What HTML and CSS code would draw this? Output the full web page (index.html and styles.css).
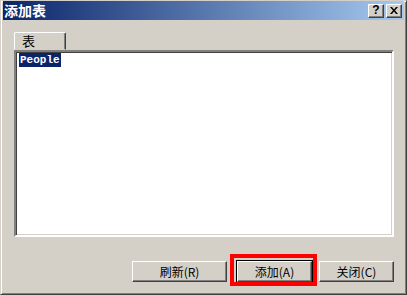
FILE: index.html
```html
<!DOCTYPE html>
<html lang="zh">
<head>
  <meta charset="UTF-8">
  <title>添加表</title>
  <link rel="stylesheet" href="styles.css">
</head>
<body>
  <div class="window">
    <div class="titlebar">
      <span class="title">添加表</span>
      <div class="caption-buttons">
        <span class="cap-btn">?</span>
        <span class="cap-btn close">
          <svg width="8" height="7" viewBox="0 0 8 7">
            <path d="M0 0h2l2 2.5L6 0h2L5 3.5 8 7H6L4 4.5 2 7H0l3-3.5z" fill="#000"/>
          </svg>
        </span>
      </div>
    </div>

    <div class="content">
      <div class="tabs">
        <div class="tab">表</div>
      </div>
      <div class="list">
        <div class="item selected">People</div>
      </div>
      <div class="buttons">
        <button class="btn wide">刷新(R)</button>
        <div class="marked">
          <button class="btn default">添加(A)</button>
        </div>
        <button class="btn">关闭(C)</button>
      </div>
    </div>
  </div>
</body>
</html>
```

FILE: styles.css
```css
body {
  margin: 0;
  font-family: "Noto Sans CJK SC", "DejaVu Sans", sans-serif;
  font-size: 12px;
  background: #d4d0c8;
}

.window {
  width: 407px;
  height: 295px;
  box-sizing: border-box;
  background: #d4d0c8;
  border: 1px solid;
  border-color: #d4d0c8 #404040 #404040 #d4d0c8;
  box-shadow: inset 1px 1px #fff, inset -1px -1px #808080;
  padding: 0 2px 2px 2px;
  display: flex;
  flex-direction: column;
}

.titlebar {
  height: 19px;
  background: linear-gradient(to right, #0a246a, #a6caf0);
  display: flex;
  align-items: center;
  justify-content: space-between;
  padding: 0 2px 0 1px;
}

.title {
  color: #fff;
  font-weight: bold;
  font-size: 14px;
  line-height: 19px;
}

.caption-buttons {
  display: flex;
  gap: 2px;
}

.cap-btn {
  width: 16px;
  height: 14px;
  box-sizing: border-box;
  background: #d4d0c8;
  border: 1px solid;
  border-color: #fff #404040 #404040 #fff;
  box-shadow: inset -1px -1px #808080;
  display: flex;
  align-items: center;
  justify-content: center;
  font-family: "Liberation Sans", sans-serif;
  font-weight: bold;
  font-size: 12px;
  line-height: 12px;
  padding-bottom: 1px;
}

.content {
  flex: 1;
  padding: 12px 10px 0 11px;
  display: flex;
  flex-direction: column;
}

.tabs {
  display: flex;
}

.tab {
  width: 52px;
  height: 18px;
  box-sizing: border-box;
  border: 1px solid;
  border-color: #fff #404040 transparent #fff;
  border-radius: 2px 2px 0 0;
  box-shadow: inset -1px 0 #808080;
  padding: 0 0 0 7px;
  line-height: 16px;
  font-size: 13px;
  color: #000;
}

.list {
  height: 187px;
  box-sizing: border-box;
  background: #fff;
  border: 2px solid;
  border-color: #808080 #fff #fff #808080;
  box-shadow: inset 1px 1px #404040, inset -1px -1px #d4d0c8;
  padding: 1px 3px;
  display: flex;
  flex-direction: column;
  align-items: flex-start;
}

.item {
  font-family: "Liberation Mono", monospace;
  font-size: 11px;
  font-weight: bold;
  line-height: 14px;
  padding: 0 1px;
}

.item.selected {
  background: #0a246a;
  color: #fff;
}

.buttons {
  margin-top: 24px;
  display: flex;
  justify-content: flex-end;
  align-items: center;
  gap: 7px;
}

.btn {
  width: 75px;
  height: 21px;
  box-sizing: border-box;
  background: #d4d0c8;
  border: 1px solid;
  border-color: #fff #404040 #404040 #fff;
  box-shadow: inset -1px -1px #808080;
  font-family: "Noto Sans CJK SC", sans-serif;
  font-size: 12px;
  line-height: 17px;
  padding: 0;
  color: #000;
}

.btn.wide {
  width: 95px;
  margin-right: 3px;
}

.btn.default {
  outline: 1px solid #000;
}

.marked {
  position: relative;
}

.marked::after {
  content: "";
  position: absolute;
  left: -7px;
  top: -7px;
  right: -5px;
  bottom: -4px;
  border: 4px solid #ff0000;
  pointer-events: none;
}
```
